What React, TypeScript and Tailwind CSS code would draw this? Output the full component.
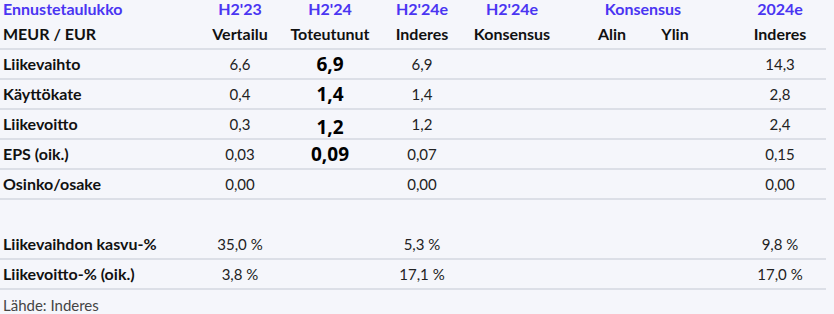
import React from 'react';

type Cell = React.ReactNode;

const font = { fontFamily: 'Lato, "Liberation Sans", sans-serif' };

// column widths: label, H2'23, H2'24, H2'24e Inderes, H2'24e Konsensus, gap, Alin, Ylin, gap, 2024e
function Row({ label, cells, line = true }: { label: Cell; cells: Cell[]; line?: boolean }) {
  return (
    <div className={`flex items-center h-[30px] ${line ? 'border-b-2 border-[#dcdfe7]' : ''} w-[826px]`}>
      <div className="w-[196px] pl-[3px] font-bold text-[16px] text-[#111]">{label}</div>
      <div className="w-[88px] text-center">{cells[0]}</div>
      <div className="w-[92px] text-center">{cells[1]}</div>
      <div className="w-[92px] text-center">{cells[2]}</div>
      <div className="w-[88px] text-center">{cells[3]}</div>
      <div className="w-[20px]" />
      <div className="w-[72px] text-center">{cells[4]}</div>
      <div className="w-[54px] text-center">{cells[5]}</div>
      <div className="w-[32px]" />
      <div className="w-[92px] text-center">{cells[6]}</div>
    </div>
  );
}

const B = ({ children, className = '' }: { children: React.ReactNode; className?: string }) => (
  <span className={`font-bold text-[19px] text-black ${className}`} style={{ fontFamily: '"Open Sans", "Liberation Sans", sans-serif' }}>
    {children}
  </span>
);

const data: { label: string; v: Cell[] }[] = [
  { label: 'Liikevaihto', v: ['6,6', <B>6,9</B>, '6,9', '', '', '', '14,3'] },
  { label: 'Käyttökate', v: ['0,4', <B>1,4</B>, '1,4', '', '', '', '2,8'] },
  { label: 'Liikevoitto', v: ['0,3', <B className="relative top-[3px]">1,2</B>, '1,2', '', '', '', '2,4'] },
  { label: 'EPS (oik.)', v: ['0,03', <B>0,09</B>, '0,07', '', '', '', '0,15'] },
  { label: 'Osinko/osake', v: ['0,00', '', '0,00', '', '', '', '0,00'] },
];

export default function App() {
  return (
    <div className="w-[834px] h-[314px] bg-[#f5f6fb] text-[15px] text-[#222] overflow-hidden" style={font}>
      {/* header line 1 */}
      <div className="flex items-center h-[18px] leading-[18px] w-[826px] font-bold text-[16px] text-[#4a35f2]">
        <div className="w-[196px] pl-[3px]">Ennustetaulukko</div>
        <div className="w-[88px] text-center">H2'23</div>
        <div className="w-[92px] text-center">H2'24</div>
        <div className="w-[92px] text-center">H2'24e</div>
        <div className="w-[88px] text-center">H2'24e</div>
        <div className="w-[20px]" />
        <div className="w-[126px] text-center pl-[8px]">Konsensus</div>
        <div className="w-[32px]" />
        <div className="w-[92px] text-center">2024e</div>
      </div>
      {/* header line 2 */}
      <div className="flex items-center h-[32px] pt-[2px] w-[826px] border-b-2 border-[#dcdfe7] font-bold text-[16px] text-[#111]">
        <div className="w-[196px] pl-[3px]">MEUR / EUR</div>
        <div className="w-[88px] text-center">Vertailu</div>
        <div className="w-[92px] text-center">Toteutunut</div>
        <div className="w-[92px] text-center">Inderes</div>
        <div className="w-[88px] text-center">Konsensus</div>
        <div className="w-[20px]" />
        <div className="w-[72px] text-center">Alin</div>
        <div className="w-[54px] text-center">Ylin</div>
        <div className="w-[32px]" />
        <div className="w-[92px] text-center">Inderes</div>
      </div>

      {data.map((r) => (
        <Row key={r.label} label={r.label} cells={r.v} />
      ))}

      <div className="h-[30px]" />

      <Row label="Liikevaihdon kasvu-%" cells={['35,0 %', '', '5,3 %', '', '', '', '9,8 %']} />
      <Row label="Liikevoitto-% (oik.)" cells={['3,8 %', '', '17,1 %', '', '', '', '17,0 %']} />

      <div className="pl-[3px] pt-[7px] leading-[17px] text-[15px] text-[#444]">Lähde: Inderes</div>
    </div>
  );
}
